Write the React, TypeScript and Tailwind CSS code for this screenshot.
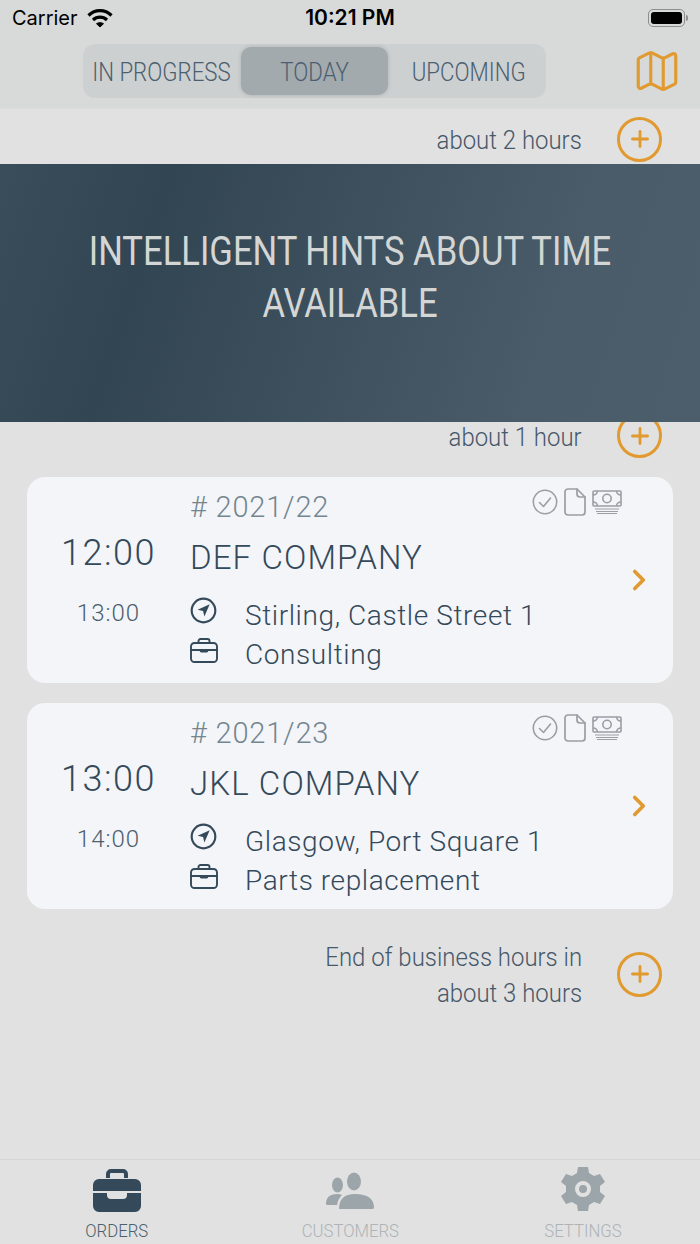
import { ChevronRight, Map, Plus } from "lucide-react";

const orders = [
  { number: "# 2021/22", start: "12:00", end: "13:00", company: "DEF COMPANY", address: "Stirling, Castle Street 1", service: "Consulting" },
  { number: "# 2021/23", start: "13:00", end: "14:00", company: "JKL COMPANY", address: "Glasgow, Port Square 1", service: "Parts replacement" },
];

function AddButton() {
  return (
    <div className="-mt-[2px] flex h-[45px] w-[45px] items-center justify-center rounded-full border-[3px] border-[#e09a2f] text-[#e09a2f]">
      <Plus size={26} strokeWidth={2.6} />
    </div>
  );
}

function Hint({ lines }: { lines: string[] }) {
  return (
    <div className="flex items-center justify-end gap-[35px] pr-[38px]">
      <div className="origin-right scale-x-[0.92] text-right text-[26px] leading-[36px] font-light text-[#46586a]">
        {lines.map((line) => (
          <div key={line} className="whitespace-nowrap">{line}</div>
        ))}
      </div>
      <AddButton />
    </div>
  );
}

function NavArrow() {
  return (
    <svg className="h-[27px] w-[27px]" viewBox="0 0 24 24" fill="none" stroke="currentColor" strokeWidth="2" strokeLinecap="round" strokeLinejoin="round">
      <circle cx="12" cy="12" r="10.5" strokeWidth="1.9" />
      <path d="M17.5 6.500 6.800 11.300l4.800 1.200 1.200 4.800z" fill="currentColor" stroke="none" />
    </svg>
  );
}

function CaseIcon() {
  return (
    <svg className="h-[25px] w-[28px]" viewBox="0 0 28 25" fill="none" stroke="currentColor" strokeWidth="1.9" strokeLinecap="round" strokeLinejoin="round">
      <rect x="1" y="5" width="26" height="19" rx="3.500" />
      <path d="M8.500 5V3a2 2 0 0 1 2-2h7a2 2 0 0 1 2 2v2" />
      <path d="M1 12h9.500M17.500 12H27" />
      <path d="M10.500 12h7v.5a1 1 0 0 1-1 1h-5a1 1 0 0 1-1-1z" fill="currentColor" />
    </svg>
  );
}

function StatusIcons() {
  return (
    <div className="-mt-[1px] flex items-center gap-[6px] text-[#9a9ea5]">
      <svg className="h-[26px] w-[26px]" viewBox="0 0 26 26" fill="none" stroke="currentColor" strokeWidth="1.6" strokeLinecap="round" strokeLinejoin="round">
        <circle cx="13" cy="13" r="11.700" />
        <path d="m7.500 13.500 4 4 7-8.500" />
      </svg>
      <svg className="h-[28px] w-[22px]" viewBox="0 0 22 28" fill="none" stroke="currentColor" strokeWidth="1.7" strokeLinecap="round" strokeLinejoin="round">
        <path d="M4 1h9l8 8v15a3 3 0 0 1-3 3H4a3 3 0 0 1-3-3V4a3 3 0 0 1 3-3z" />
        <path d="M13 1v5a3 3 0 0 0 3 3h5" />
      </svg>
      <svg className="h-[24px] w-[30px]" viewBox="0 0 30 24" fill="none" stroke="currentColor" strokeWidth="1.6">
        <rect x="1" y="1" width="28" height="15" rx="1" />
        <circle cx="15" cy="8.500" r="4.200" />
        <path d="M1 5q4 0 4.500-4M29 5q-4 0-4.500-4M1 12q4 0 4.500 4M29 12q-4 0-4.500 4" />
        <path d="M3 19h24M4 21.500h22M5 23.500h20" strokeWidth="1.100" />
      </svg>
    </div>
  );
}

function OrderCard({ order }: { order: (typeof orders)[number] }) {
  return (
    <div className="flex h-[206px] items-stretch rounded-[18px] bg-[#f3f5f9] text-[#34495a]">
      <div className="flex w-[163px] flex-col items-center pt-[54px]">
        <div className="text-[36px] leading-[44px] font-light tracking-[1.5px]">{order.start}</div>
        <div className="mt-[22px] text-[24px] leading-[32px] font-light tracking-[1px] text-[#4d5f6e]">{order.end}</div>
      </div>
      <div className="flex-1">
        <div className="-mr-[17px] flex h-[61px] items-start justify-between pt-[12px]">
          <div className="text-[29px] leading-[36px] font-light tracking-[0.8px] text-[#74858f]">{order.number}</div>
          <StatusIcons />
        </div>
        <div className="text-[33px] leading-[40px] font-light tracking-[1.1px]">{order.company}</div>
        <div className="mt-[19px] flex h-[38px] items-center text-[28px] font-light tracking-[0.6px]">
          <span className="-mt-[12px] w-[55px]"><NavArrow /></span>
          <span>{order.address}</span>
        </div>
        <div className="flex h-[40px] items-center text-[28px] font-light tracking-[0.6px]">
          <span className="-mt-[10px] w-[55px]"><CaseIcon /></span>
          <span>{order.service}</span>
        </div>
      </div>
      <div className="flex w-[68px] items-center justify-center text-[#e09a2f]">
        <ChevronRight size={34} strokeWidth={2.6} />
      </div>
    </div>
  );
}

function TabBar() {
  const label = "mt-[9px] scale-x-[0.88] text-[19px] leading-[20px] font-light";
  return (
    <div className="grid h-[85px] grid-cols-3 border-t border-[#d6d6d6]">
      <div className="flex flex-col items-center pt-[8px] text-[#34495a]">
        <svg className="h-[44px] w-[50px]" viewBox="0 0 50 44" fill="currentColor">
          <path d="M14 10V6a5 5 0 0 1 5-5h12a5 5 0 0 1 5 5v4h-4V6q0-1-1-1H19q-1 0-1 1v4z" />
          <path d="M1 17a6 6 0 0 1 6-6h36a6 6 0 0 1 6 6v6H1zM1 25h14v2a4 4 0 0 0 4 4h12a4 4 0 0 0 4-4v-2h14v13a6 6 0 0 1-6 6H7a6 6 0 0 1-6-6z" />
        </svg>
        <span className={`${label} text-[#4b5f6e]`}>ORDERS</span>
      </div>
      <div className="flex flex-col items-center pt-[8px] text-[#9ca5aa]">
        <svg className="h-[44px] w-[50px]" viewBox="0 0 50 44" fill="currentColor">
          <ellipse cx="12.500" cy="17" rx="5.500" ry="7.500" />
          <ellipse cx="29" cy="13.500" rx="7" ry="9" />
          <path d="M1 36q0-10 11-10 3 0 5 1-4 4-5 10H2.500Q1 37 1 36zM14 41q0-15 16-15 19 0 19 14 0 1-2 1z" />
        </svg>
        <span className={`${label} text-[#adb3b7]`}>CUSTOMERS</span>
      </div>
      <div className="flex flex-col items-center pt-[8px] text-[#9ca5aa]">
        <svg className="-mt-[2px] h-[46px] w-[46px]" viewBox="0 0 46 46" fill="currentColor" fillRule="evenodd">
          <path d="M18 1h10l1 6 5 3 6-2 5 8-5 4v6l5 4-5 8-6-2-5 3-1 6H18l-1-6-5-3-6 2-5-8 5-4v-6l-5-4 5-8 6 2 5-3zM23 15a8 8 0 1 0 0 16 8 8 0 0 0 0-16zM23 19a4 4 0 1 1 0 8 4 4 0 0 1 0-8z" />
        </svg>
        <span className={`${label} text-[#adb3b7]`}>SETTINGS</span>
      </div>
    </div>
  );
}

export default function App() {
  return (
    <div className="flex h-[1244px] w-[700px] flex-col overflow-hidden bg-[#e1e1e1] font-['Roboto',sans-serif]">
      <div className="h-[109px] border-b border-[#dcdedd] bg-[#d8dad9]">
        <div className="flex h-[36px] items-center justify-between px-[12px] font-['Inter',sans-serif] text-[20px] text-black">
          <div className="flex w-[200px] items-center gap-[9px]">
            <span>Carrier</span>
            <svg className="h-[20px] w-[26px]" viewBox="0 0 26 20" fill="none" stroke="currentColor" strokeWidth="3.200">
              <path d="M1.500 7.500C8 1 18 1 24.500 7.500" />
              <path d="M6 12c4-3.800 10-3.800 14 0" />
              <path d="m9.500 15.700 3.500 3.300 3.500-3.300c-2-1.400-5-1.400-7 0z" fill="currentColor" strokeWidth="1" />
            </svg>
          </div>
          <span className="text-[21px] font-semibold">10:21 PM</span>
          <div className="flex w-[200px] items-center justify-end">
            <div className="flex h-[18px] w-[37px] items-center rounded-[5px] border border-[#8e8e8e] p-[2px]">
              <div className="h-full w-full rounded-[3px] bg-black" />
            </div>
            <div className="ml-[1px] h-[6px] w-[2px] rounded-r-full bg-[#8e8e8e]" />
          </div>
        </div>
        <div className="flex items-center pt-[8px]">
          <div className="ml-[83px] flex h-[54px] w-[463px] items-center rounded-[12px] bg-[#cdd0d1] text-[25px] font-light text-[#4b5f70]">
            <div className="w-[157px] scale-x-[0.89] pt-[3px] text-center whitespace-nowrap">IN PROGRESS</div>
            <div className="ml-[1px] flex h-[48px] w-[147px] items-center justify-center rounded-[10px] bg-[#a3aaad] pt-[3px] shadow-[0_0_4px_rgba(0,0,0,0.15)]">
              <span className="scale-x-[0.89]">TODAY</span>
            </div>
            <div className="flex-1 scale-x-[0.89] pl-[4px] pt-[3px] text-center">UPCOMING</div>
          </div>
          <Map className="ml-[86px] text-[#e09a2f]" size={50} strokeWidth={1.5} />
        </div>
      </div>

      <div className="flex h-[55px] items-center pt-[7px]">
        <div className="w-full"><Hint lines={["about 2 hours"]} /></div>
      </div>

      <div className="relative z-10 flex h-[258px] items-center justify-center bg-[linear-gradient(108deg,#3a4d5a_0%,#324552_22%,#4a5c69_78%,#4c5e6b_100%)] pb-[30px] text-[#d4d6d5]">
        <div className="w-[680px] shrink-0 scale-x-[0.865] px-[30px] text-center text-[40px] leading-[52px]">
          INTELLIGENT HINTS ABOUT TIME AVAILABLE
        </div>
      </div>

      <div className="-mt-[7px]"><Hint lines={["about 1 hour"]} /></div>

      <div className="mt-[19px] flex flex-col gap-[20px] px-[27px]">
        {orders.map((order) => (
          <OrderCard key={order.number} order={order} />
        ))}
      </div>

      <div className="mt-[30px]"><Hint lines={["End of business hours in", "about 3 hours"]} /></div>

      <div className="mt-auto"><TabBar /></div>
    </div>
  );
}
